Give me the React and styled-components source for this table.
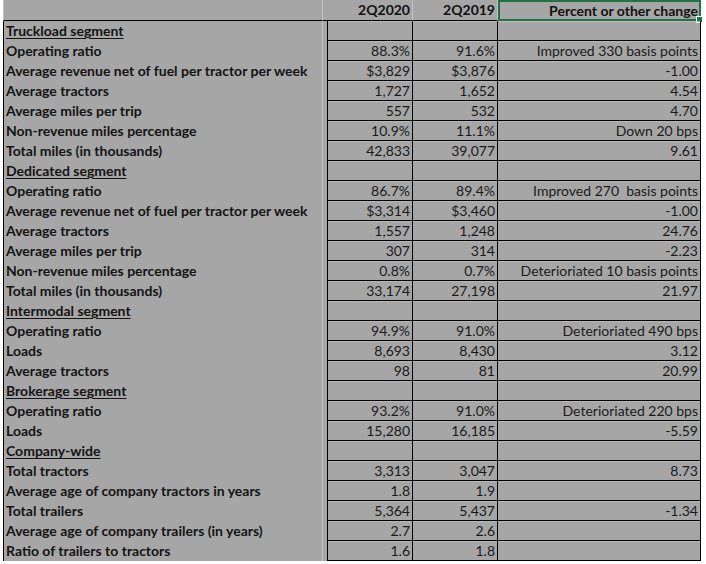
import React from "react";
import styled, { createGlobalStyle } from "styled-components";

const Global = createGlobalStyle`
  html, body { margin: 0; padding: 0; background: #ffffff; }
  body { font-family: Lato, "Liberation Sans", sans-serif; }
`;

const Sheet = styled.div`
  margin-left: 3px;
  width: 698px;
  background: #a6a6a6;
  color: #141414;
  font-size: 14px;
`;

const Row = styled.div`
  display: grid;
  grid-template-columns: 319px 5px 86px 85px 203px;
  height: ${(p) => (p.$header ? 21 : 20)}px;
`;

const Label = styled.div`
  box-sizing: border-box;
  height: 100%;
  padding: 0 0 0 2px;
  line-height: 20px;
  font-weight: 700;
  white-space: nowrap;
  border-left: 1px solid ${(p) => (p.$header ? "#c4c4c4" : "#000")};
  border-bottom: ${(p) => (p.$header ? "1px solid #000" : "none")};
  text-decoration: ${(p) => (p.$section ? "underline" : "none")};
  text-underline-offset: 2px;
  text-decoration-thickness: 1px;
`;

const Spacer = styled.div`
  box-sizing: border-box;
  height: 100%;
  border-left: 1px solid #c2c2c2;
  border-bottom: ${(p) => (p.$header ? "1px solid #000" : "none")};
`;

const Cell = styled.div`
  position: relative;
  box-sizing: border-box;
  height: 100%;
  padding: 0 2px 0 0;
  text-align: right;
  line-height: ${(p) => (p.$header ? 20 : 19)}px;
  white-space: nowrap;
  font-weight: ${(p) => (p.$header ? 700 : 400)};
  color: ${(p) => (p.$header ? "#111" : "#1a1a1a")};
  border-bottom: 1px solid #000;
  border-right: 1px solid ${(p) => (p.$header ? "#c2c2c2" : "#000")};
  border-left: ${(p) => (p.$first ? (p.$header ? "none" : "1px solid #000") : "none")};
  box-shadow: ${(p) => (p.$header ? "none" : "inset 0 1px 0 #b9b9b9")};
`;

const ActiveCell = styled.div`
  position: relative;
  box-sizing: border-box;
  height: 100%;
  padding: 0 1px 0 0;
  text-align: right;
  line-height: 17px;
  white-space: nowrap;
  font-weight: 700;
  color: #111;
  border: 2px solid #217346;
`;

const Handle = styled.span`
  position: absolute;
  right: -4px;
  bottom: -4px;
  width: 5px;
  height: 5px;
  background: #217346;
  border: 1px solid #ffffff;
`;

const rows = [
  { label: "Truckload segment", section: true },
  { label: "Operating ratio", a: "88.3%", b: "91.6%", c: "Improved 330 basis points" },
  { label: "Average revenue net of fuel per tractor per week", a: "$3,829", b: "$3,876", c: "-1.00" },
  { label: "Average tractors", a: "1,727", b: "1,652", c: "4.54" },
  { label: "Average miles per trip", a: "557", b: "532", c: "4.70" },
  { label: "Non-revenue miles percentage", a: "10.9%", b: "11.1%", c: "Down 20 bps" },
  { label: "Total miles (in thousands)", a: "42,833", b: "39,077", c: "9.61" },
  { label: "Dedicated segment", section: true },
  { label: "Operating ratio", a: "86.7%", b: "89.4%", c: "Improved 270\u00a0 basis points" },
  { label: "Average revenue net of fuel per tractor per week", a: "$3,314", b: "$3,460", c: "-1.00" },
  { label: "Average tractors", a: "1,557", b: "1,248", c: "24.76" },
  { label: "Average miles per trip", a: "307", b: "314", c: "-2.23" },
  { label: "Non-revenue miles percentage", a: "0.8%", b: "0.7%", c: "Deterioriated 10 basis points" },
  { label: "Total miles (in thousands)", a: "33,174", b: "27,198", c: "21.97" },
  { label: "Intermodal segment", section: true },
  { label: "Operating ratio", a: "94.9%", b: "91.0%", c: "Deterioriated 490 bps" },
  { label: "Loads", a: "8,693", b: "8,430", c: "3.12" },
  { label: "Average tractors", a: "98", b: "81", c: "20.99" },
  { label: "Brokerage segment", section: true },
  { label: "Operating ratio", a: "93.2%", b: "91.0%", c: "Deterioriated 220 bps" },
  { label: "Loads", a: "15,280", b: "16,185", c: "-5.59" },
  { label: "Company-wide", section: true },
  { label: "Total tractors", a: "3,313", b: "3,047", c: "8.73" },
  { label: "Average age of company tractors in years", a: "1.8", b: "1.9", c: "" },
  { label: "Total trailers", a: "5,364", b: "5,437", c: "-1.34" },
  { label: "Average age of company trailers (in years)", a: "2.7", b: "2.6", c: "" },
  { label: "Ratio of trailers to tractors", a: "1.6", b: "1.8", c: "" },
];

export default function App() {
  return (
    <>
      <Global />
      <Sheet>
        <Row $header>
          <Label $header />
          <Spacer $header />
          <Cell $header $first>2Q2020</Cell>
          <Cell $header>2Q2019</Cell>
          <ActiveCell>
            Percent or other change
            <Handle />
          </ActiveCell>
        </Row>
        {rows.map((r, i) => (
          <Row key={i}>
            <Label $section={r.section}>{r.label}</Label>
            <Spacer />
            <Cell $first>{r.a}</Cell>
            <Cell>{r.b}</Cell>
            <Cell>{r.c}</Cell>
          </Row>
        ))}
      </Sheet>
    </>
  );
}
